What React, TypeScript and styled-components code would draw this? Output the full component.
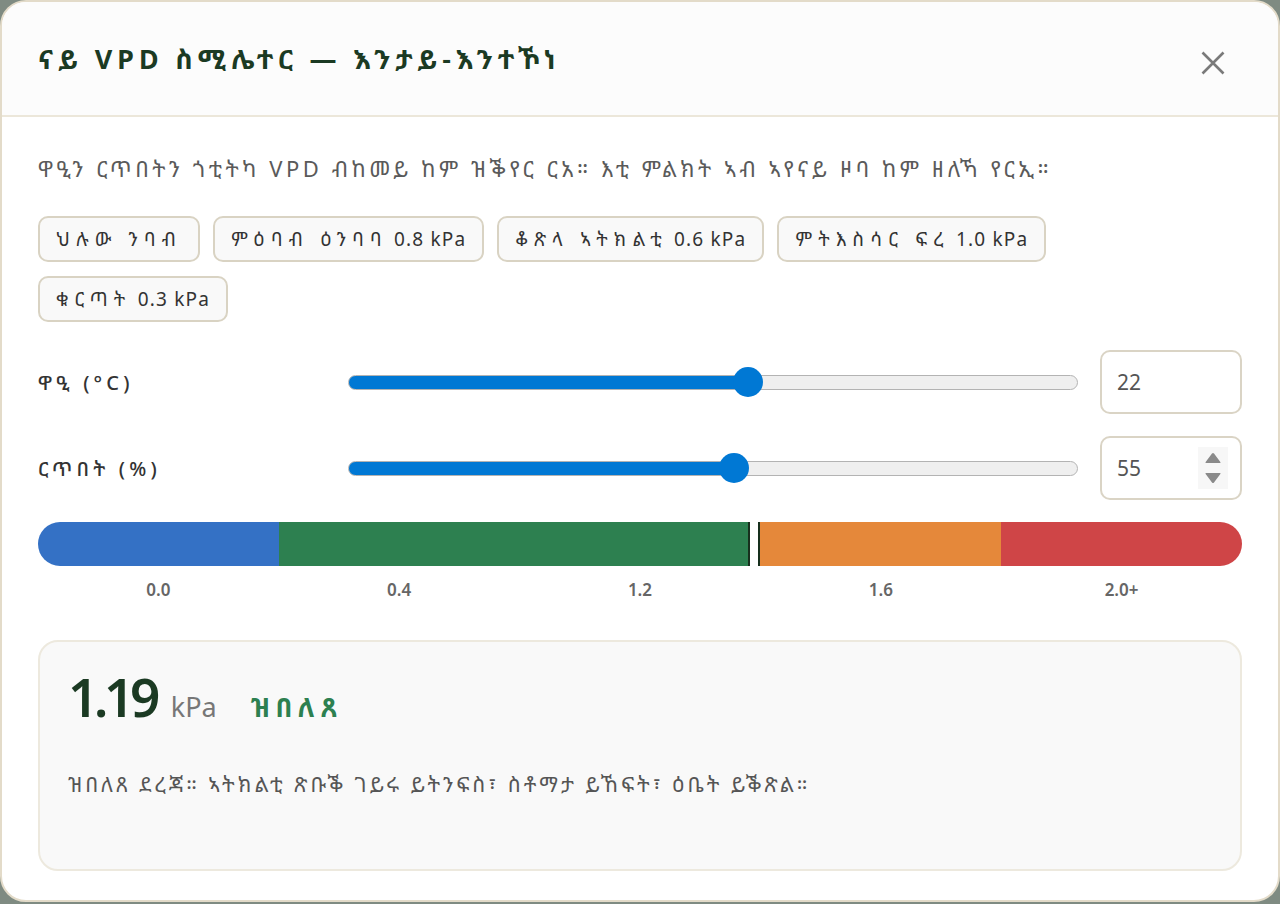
import React, { useState } from "react";
import styled, { createGlobalStyle, css } from "styled-components";

const font = css`
  font-family: "Noto Sans Ethiopic", "Noto Sans", sans-serif;
`;

const GlobalStyle = createGlobalStyle`
  html, body {
    margin: 0;
    padding: 0;
    background: #7f8b82;
    font-family: "Noto Sans Ethiopic", "Noto Sans", sans-serif;
  }
  * { box-sizing: border-box; }
`;

const PRESETS = [
  { label: "ህሉው ንባብ", value: "" },
  { label: "ምዕባብ ዕንባባ", value: "0.8 kPa" },
  { label: "ቆጽላ ኣትክልቲ", value: "0.6 kPa" },
  { label: "ምትእስሳር ፍረ", value: "1.0 kPa" },
  { label: "ቁርጣት", value: "0.3 kPa" },
];

const SEGMENTS = [
  { color: "#3471c5", grow: 1 },
  { color: "#2d8050", grow: 2 },
  { color: "#e5883a", grow: 1 },
  { color: "#cf4547", grow: 1 },
];

const TICKS = ["0.0", "0.4", "1.2", "1.6", "2.0+"];

const calcVpd = (t: number, rh: number) => {
  const svp = 0.6108 * Math.exp((17.27 * t) / (t + 237.3));
  return svp * (1 - rh / 100);
};

const App = () => {
  const [temp, setTemp] = useState(22);
  const [hum, setHum] = useState(55);

  const vpd = calcVpd(temp, hum);
  const markerPos = Math.min(vpd / 2, 1) * 100;

  return (
    <>
      <GlobalStyle />
      <Modal>
        <Header>
          <Title>ናይ VPD ስሚሌተር — እንታይ-እንተኾነ</Title>
          <CloseButton aria-label="close">
            <svg width="24" height="24" viewBox="0 0 24 24">
              <path d="M1.5 1.5 L22.5 22.5 M22.5 1.5 L1.5 22.5" stroke="#7a7a7a" strokeWidth="2.6" />
            </svg>
          </CloseButton>
        </Header>
        <Body>
          <Intro>ዋዒን ርጥበትን ጎቲትካ VPD ብከመይ ከም ዝቕየር ርአ። እቲ ምልክት ኣብ ኣየናይ ዞባ ከም ዘለኻ የርኢ።</Intro>
          <Chips>
            {PRESETS.map((p) => (
              <Chip key={p.label}>
                {p.label}
                {p.value && <ChipValue> {p.value}</ChipValue>}
              </Chip>
            ))}
          </Chips>

          <ControlRow>
            <ControlLabel>ዋዒ (°C)</ControlLabel>
            <Range
              type="range"
              min={0}
              max={40}
              value={temp}
              $fill={(temp / 40) * 100}
              onChange={(e) => setTemp(Number(e.target.value))}
            />
            <NumberWrap>
              <NumberInput type="number" value={temp} onChange={(e) => setTemp(Number(e.target.value))} />
            </NumberWrap>
          </ControlRow>

          <ControlRow>
            <ControlLabel>ርጥበት (%)</ControlLabel>
            <Range
              type="range"
              min={10}
              max={95}
              value={hum}
              $fill={((hum - 10) / 85) * 100}
              onChange={(e) => setHum(Number(e.target.value))}
            />
            <NumberWrap>
              <NumberInput type="number" value={hum} onChange={(e) => setHum(Number(e.target.value))} />
              <Spinner>
                <svg width="16" height="38" viewBox="0 0 16 38">
                  <path d="M0.5 14 Q0.5 13 1.2 12.2 L7 4.6 Q8 3.6 9 4.6 L14.8 12.2 Q15.5 13 15.5 14 Z" fill="#8a8a8a" />
                  <path d="M0.5 24 Q0.5 25 1.2 25.8 L7 33.4 Q8 34.4 9 33.4 L14.8 25.8 Q15.5 25 15.5 24 Z" fill="#8a8a8a" />
                </svg>
              </Spinner>
            </NumberWrap>
          </ControlRow>

          <ScaleBar>
            {SEGMENTS.map((s) => (
              <Segment key={s.color} $color={s.color} $grow={s.grow} />
            ))}
            <Marker style={{ left: `${markerPos}%` }} />
          </ScaleBar>
          <Ticks>
            {TICKS.map((t) => (
              <Tick key={t}>{t}</Tick>
            ))}
          </Ticks>

          <ResultCard>
            <ResultTop>
              <Value>{vpd.toFixed(2)}</Value>
              <Unit>kPa</Unit>
              <Status>ዝበለጸ</Status>
            </ResultTop>
            <ResultText>ዝበለጸ ደረጃ። ኣትክልቲ ጽቡቕ ገይሩ ይትንፍስ፣ ስቶማታ ይኸፍት፣ ዕቤት ይቕጽል።</ResultText>
          </ResultCard>
        </Body>
      </Modal>
    </>
  );
};

const Modal = styled.div`
  ${font};
  width: 1280px;
  height: 902px;
  background: #ffffff;
  border: 2px solid #e3dbc9;
  border-radius: 26px;
  overflow: hidden;
  display: flex;
  flex-direction: column;
`;

const Header = styled.div`
  height: 115px;
  flex-shrink: 0;
  display: flex;
  align-items: center;
  justify-content: space-between;
  padding: 0 45px 0 36px;
  background: #fcfcfc;
  border-bottom: 2px solid #ece7da;
`;

const Title = styled.h2`
  ${font};
  margin: 0;
  font-size: 27px;
  font-weight: 700;
  color: #1b3a23;
  letter-spacing: 4.8px;
`;

const CloseButton = styled.button`
  border: none;
  background: transparent;
  padding: 0;
  margin-top: 8px;
  width: 40px;
  height: 40px;
  display: flex;
  align-items: center;
  justify-content: center;
  cursor: pointer;
`;

const Body = styled.div`
  padding: 36px 36px 30px;
  display: flex;
  flex-direction: column;
`;

const Intro = styled.p`
  ${font};
  margin: 0 0 33px;
  font-size: 22px;
  line-height: 30px;
  letter-spacing: 3.55px;
  color: #5a5a5a;
  white-space: nowrap;
`;

const Chips = styled.div`
  display: flex;
  flex-wrap: wrap;
  gap: 14px 13px;
  margin-bottom: 28px;
  padding-right: 12px;
`;

const Chip = styled.button`
  ${font};
  height: 46px;
  padding: 0 16px;
  border: 2px solid #d9d3c3;
  border-radius: 10px;
  background: #f9f9f9;
  font-size: 19px;
  letter-spacing: 6.2px;
  color: #333;
  white-space: pre;
  cursor: pointer;
`;

const ChipValue = styled.span`
  letter-spacing: 1.2px;
`;

const ControlRow = styled.div`
  display: grid;
  grid-template-columns: 288px 1fr 142px;
  column-gap: 22px;
  align-items: center;
  margin-bottom: 22px;
`;

const ControlLabel = styled.label`
  ${font};
  font-size: 20px;
  font-weight: 500;
  letter-spacing: 4.2px;
  color: #333;
`;

const Range = styled.input<{ $fill: number }>`
  -webkit-appearance: none;
  appearance: none;
  width: 100%;
  height: 30px;
  margin: 0;
  background: transparent;
  cursor: pointer;

  &::-webkit-slider-runnable-track {
    height: 15px;
    border-radius: 8px;
    border: 1px solid #b3b3b3;
    background: linear-gradient(
      to right,
      #0078d4 0%,
      #0078d4 ${({ $fill }) => $fill}%,
      #efefef ${({ $fill }) => $fill}%,
      #efefef 100%
    );
  }
  &::-webkit-slider-thumb {
    -webkit-appearance: none;
    width: 30px;
    height: 30px;
    border-radius: 50%;
    background: #0078d4;
    border: none;
    margin-top: -8.5px;
  }
`;

const NumberWrap = styled.div`
  position: relative;
`;

const NumberInput = styled.input`
  ${font};
  width: 142px;
  height: 64px;
  border: 2px solid #dad4c5;
  border-radius: 10px;
  padding: 0 15px;
  font-size: 21px;
  color: #555;
  background: #fff;
  outline: none;
  -moz-appearance: textfield;

  &::-webkit-outer-spin-button,
  &::-webkit-inner-spin-button {
    -webkit-appearance: none;
    margin: 0;
  }
`;

const Spinner = styled.div`
  position: absolute;
  top: 11px;
  right: 14px;
  width: 30px;
  height: 42px;
  background: #f7f7f7;
  display: flex;
  align-items: center;
  justify-content: center;
`;

const ScaleBar = styled.div`
  position: relative;
  display: flex;
  height: 44px;
  border-radius: 22px;
  overflow: hidden;
`;

const Segment = styled.div<{ $color: string; $grow: number }>`
  flex: ${({ $grow }) => $grow};
  background: ${({ $color }) => $color};
`;

const Marker = styled.div`
  position: absolute;
  top: 0;
  bottom: 0;
  width: 12px;
  margin-left: -6px;
  background: #ffffff;
  border-left: 2px solid #17301d;
  border-right: 2px solid #17301d;
`;

const Ticks = styled.div`
  display: flex;
  margin-top: 12px;
`;

const Tick = styled.span`
  ${font};
  flex: 1;
  text-align: center;
  font-size: 17px;
  font-weight: 600;
  color: #666;
`;

const ResultCard = styled.div`
  margin-top: 39px;
  height: 231px;
  padding: 28px 28px;
  background: #f9f9f9;
  border: 2px solid #ede9de;
  border-radius: 20px;
`;

const ResultTop = styled.div`
  display: flex;
  align-items: baseline;
  line-height: 54px;
  height: 54px;
`;

const Value = styled.span`
  ${font};
  font-size: 53px;
  font-weight: 600;
  color: #1b3a23;
  letter-spacing: -4.5px;
`;

const Unit = styled.span`
  ${font};
  margin-left: 15px;
  font-size: 27px;
  color: #777;
`;

const Status = styled.span`
  ${font};
  margin-left: 34px;
  font-size: 26px;
  font-weight: 700;
  letter-spacing: 5.8px;
  color: #2d8050;
`;

const ResultText = styled.p`
  ${font};
  margin: 45px 0 0;
  font-size: 21px;
  line-height: 30px;
  letter-spacing: 2.95px;
  color: #555;
`;

export default App;
